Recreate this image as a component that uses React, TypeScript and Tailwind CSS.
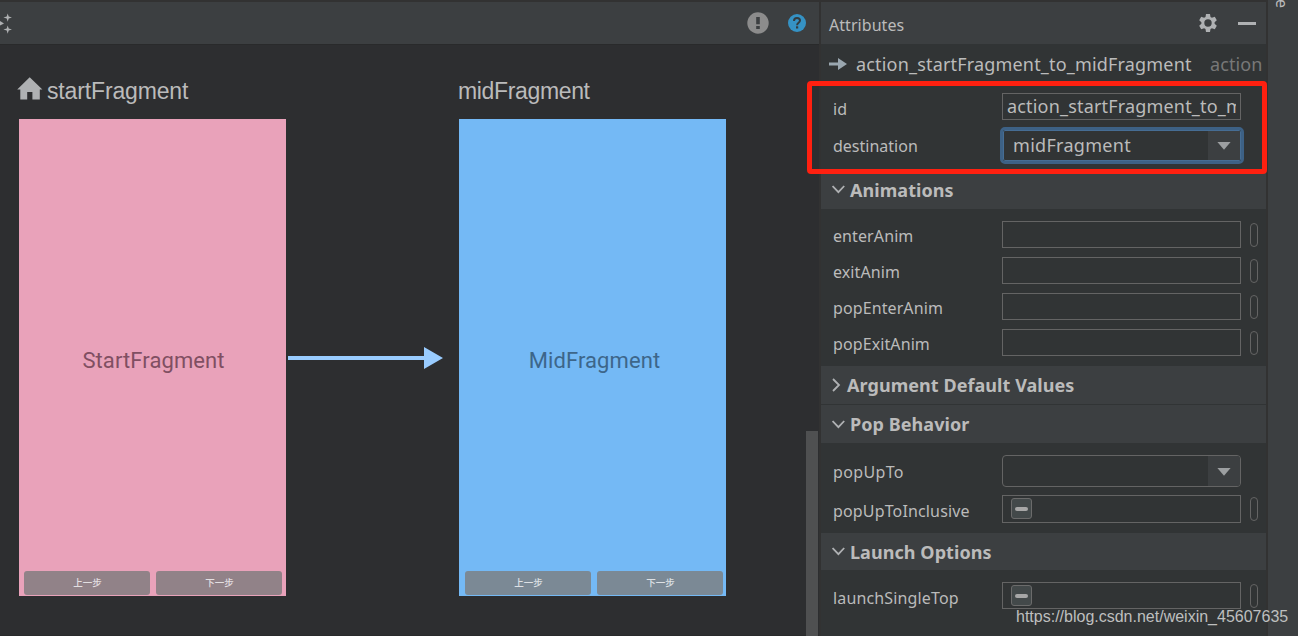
import type { ReactNode } from 'react'

function SparkIcon() {
  return (
    <svg width="13" height="22" viewBox="0 0 13 22" fill="#afb1b3">
      <path d="M0 9 4 11.4 0 13.6z" />
      <path d="M7.7 1.5 8.7 4.6 12 5.6 8.7 6.6 7.7 9.7 6.7 6.6 3.4 5.6 6.7 4.6z" />
      <path d="M7.7 13.5 8.7 16.6 12 17.6 8.7 18.6 7.7 21.7 6.7 18.6 3.4 17.6 6.7 16.6z" />
    </svg>
  )
}

function WarningIcon() {
  return (
    <svg width="22" height="22" viewBox="0 0 22 22">
      <circle cx="11" cy="11" r="10.7" fill="#8c8c8c" />
      <path d="M9.2 5h3.6v7.2H9.2zM9.2 14h3.6v3H9.2z" fill="#3c3f41" />
    </svg>
  )
}

function HelpIcon() {
  return (
    <svg width="18" height="18" viewBox="0 0 18 18" fill="none">
      <circle cx="9" cy="9" r="9" fill="#3592c4" />
      <path d="M6 6.9C6 5 7.2 4 9 4s3 1 3 2.6c0 2.2-2.9 2.3-2.9 4.6" stroke="#343b3f" strokeWidth="2" />
      <path d="M8 12.3h2.2v2.2H8z" fill="#343b3f" />
    </svg>
  )
}

function GearIcon() {
  return (
    <svg width="20" height="20" viewBox="0 0 20 20">
      <path
        d="M8 .1h4l.5 2.8 1.4.8 2.9-1 2 3.5-2.2 2v1.6l2.2 2-2 3.5-2.9-1-1.4.8-.5 2.8H8l-.5-2.8-1.4-.8-2.9 1-2-3.5 2.2-2V8.2l-2.2-2 2-3.5 2.9 1 1.4-.8zM10 5.3a3.7 3.7 0 1 0 0 7.4 3.7 3.7 0 0 0 0-7.4z"
        fill="#afb1b3"
        fillRule="evenodd"
        transform="translate(0 1)"
      />
    </svg>
  )
}

function HomeIcon() {
  return (
    <svg width="26" height="23" viewBox="0 0 26 23" fill="#afb1b3">
      <path d="M12.7.2 25.4 12.6h-2.6v9.9h-7.4v-7.6h-5.2v7.6H3.3v-9.9H.2z" />
    </svg>
  )
}

function ActionIcon() {
  return (
    <svg width="18" height="12" viewBox="0 0 18 12" fill="#9aa7b0">
      <path d="M0 4.5h9V0l9 6-9 6V7.5H0z" />
    </svg>
  )
}

function Chevron({ open }: { open: boolean }) {
  return open ? (
    <svg width="14" height="9" viewBox="0 0 14 9" fill="none" stroke="#afb1b3" strokeWidth="1.8">
      <path d="M.6 1 6.4 7.2 12.2 1" />
    </svg>
  ) : (
    <svg width="9" height="14" viewBox="0 0 9 14" fill="none" stroke="#afb1b3" strokeWidth="1.8">
      <path d="M1 1 7 7 1 13" />
    </svg>
  )
}

function DropArrow() {
  return (
    <div className="flex w-8 shrink-0 items-center justify-center bg-[#3c3f41] pt-0.5">
      <svg width="14" height="8" viewBox="0 0 14 8" fill="#9c9fa1">
        <path d="M.4 0h13.2L7 7.8z" />
      </svg>
    </div>
  )
}

function SectionHeader({ title, open = true, className }: { title: string; open?: boolean; className: string }) {
  return (
    <div className={`flex shrink-0 items-center bg-[#3c3f41] pl-[11px] text-[18px] font-bold tracking-[0.06px] text-[#bbbbbb] ${className}`}>
      <span className={open ? 'w-[18px]' : 'w-[15px]'}>
        <Chevron open={open} />
      </span>
      <span className="leading-6">{title}</span>
    </div>
  )
}

function Row({ label, labelClass, className, children }: { label: string; labelClass: string; className: string; children: ReactNode }) {
  return (
    <div className={`flex shrink-0 items-center pl-3 ${className}`}>
      <span className={`w-[169px] shrink-0 text-[16px] leading-6 text-[#bbbbbb] ${labelClass}`}>{label}</span>
      {children}
    </div>
  )
}

function TextField({ className = 'h-[27px]', children }: { className?: string; children?: ReactNode }) {
  return (
    <div className={`mb-px flex w-[239px] shrink-0 items-center overflow-hidden border border-[#646464] px-1 ${className}`}>
      {children}
    </div>
  )
}

function ResourceHandle() {
  return <div className="ml-[9px] h-6 w-2 shrink-0 rounded-[4px] border border-[#646464]" />
}

function TriState() {
  return (
    <div className="ml-1 flex h-[21px] w-[21px] items-center justify-center rounded-[3px] border border-[#6b6b6b] bg-[#43494a]">
      <div className="h-1 w-[13px] rounded-[2px] bg-[#a7a7a7]" />
    </div>
  )
}

const anims = ['enterAnim', 'exitAnim', 'popEnterAnim', 'popExitAnim']

interface ScreenProps {
  text: string
  bg: string
  textClass: string
  buttonClass: string
  padding: string
}

function Screen({ text, bg, textClass, buttonClass, padding }: ScreenProps) {
  return (
    <div className={`flex h-[477px] w-[267px] flex-col ${bg}`}>
      <div className={`flex flex-1 items-center justify-center pt-[30px] font-[Roboto] text-[22px] tracking-[0.1px] ${textClass}`}>{text}</div>
      <div className={`flex gap-[6px] pb-[0.6px] ${padding}`}>
        {['上一步', '下一步'].map(b => (
          <div
            key={b}
            className={`flex h-[24.4px] w-[126px] items-center justify-center rounded-[3px] pb-0.5 font-['Noto_Sans_CJK_SC',sans-serif] text-[9.5px] font-medium ${buttonClass}`}
          >
            {b}
          </div>
        ))}
      </div>
    </div>
  )
}

function Canvas() {
  return (
    <div className="relative flex-1 overflow-hidden border-t border-[#292a2b] bg-[#2d2e30] font-['Liberation_Sans',sans-serif] text-[#bbbbbb]">
      <div className="absolute left-[17px] top-[32px] flex">
        <HomeIcon />
        <span className="ml-1 pt-0.5 text-[23px] leading-6 tracking-[-0.15px]">startFragment</span>
      </div>
      <div className="absolute left-[19px] top-[74px]">
        <Screen text="StartFragment" bg="bg-[#e9a2ba]" textClass="text-[#804f62] pl-0.5" buttonClass="bg-[#918288] text-[#e3dfe1]" padding="pl-[5.4px]" />
      </div>
      <svg className="absolute left-[288px] top-[301px]" width="156" height="24" viewBox="0 0 156 24" fill="#99ccff">
        <path d="M0 10h136V1l19 11-19 11v-9H0z" />
      </svg>
      <div className="absolute left-[458px] top-[34px] text-[23px] leading-6 tracking-[-0.35px]">midFragment</div>
      <div className="absolute left-[459px] top-[74px]">
        <Screen text="MidFragment" bg="bg-[#74b9f5]" textClass="text-[#3d668a] pl-1" buttonClass="bg-[#7b8995] text-[#dde1e5]" padding="pl-[6.4px]" />
      </div>
      <div className="absolute bottom-0 left-0 h-px w-full bg-[#292a2b]" />
      <div className="absolute bottom-0 left-[806px] h-[205px] w-3 bg-[#4f5051]" />
    </div>
  )
}

function AttributesPanel() {
  return (
    <div className="flex w-[445px] shrink-0 flex-col bg-[#313435]">
      <div className="flex h-[42px] shrink-0 items-center bg-[#3c3f41] pl-2 pr-[10px] text-[#bbbbbb]">
        <span className="flex-1 pt-[3px] text-[16px] leading-6 tracking-[0.05px]">Attributes</span>
        <GearIcon />
        <div className="ml-5 h-[3px] w-[18px] bg-[#afb1b3]" />
      </div>
      <div className="mb-[6px] flex h-10 shrink-0 items-center whitespace-nowrap pl-2 text-[18px] leading-6 text-[#bbbbbb]">
        <ActionIcon />
        <span className="ml-[9px] w-[354px] tracking-[0.18px]">action_startFragment_to_midFragment</span>
        <span className="tracking-[0.1px] text-[#787878]">action</span>
      </div>
      <Row label="id" labelClass="pt-[3px]" className="h-[34px]">
        <TextField>
          <span className="mb-0.5 block w-[229px] overflow-hidden whitespace-nowrap text-[18px] leading-6 tracking-[0.18px] text-[#bbbbbb]">
            action_startFragment_to_midFragment
          </span>
        </TextField>
      </Row>
      <Row label="destination" labelClass="pt-px" className="h-[42px]">
        <div className="-ml-[2px] flex h-[37px] w-[244px] shrink-0 overflow-hidden rounded-[5px] border-[3px] border-[#3d6185]">
          <div className="flex flex-1 overflow-hidden rounded-[2px] border border-[#466d94]">
            <span className="flex-1 pl-[9px] text-[18px] leading-7 tracking-[0.3px] text-[#bbbbbb]">midFragment</span>
            <DropArrow />
          </div>
        </div>
      </Row>

      <SectionHeader title="Animations" className="mt-[6px] h-[37px] pb-0.5" />
      <div className="flex h-[157px] shrink-0 flex-col pt-2">
        {anims.map(name => (
          <Row key={name} label={name} labelClass="pt-px tracking-[0.1px]" className="h-9">
            <TextField />
            <ResourceHandle />
          </Row>
        ))}
      </div>

      <SectionHeader title="Argument Default Values" open={false} className="h-[38px]" />
      <SectionHeader title="Pop Behavior" className="mt-px h-[38px]" />
      <Row label="popUpTo" labelClass="pt-px tracking-[0.35px]" className="mt-[9px] h-[38px]">
        <div className="flex h-8 w-[239px] shrink-0 overflow-hidden rounded-[4px] border border-[#646464]">
          <div className="flex-1" />
          <DropArrow />
        </div>
      </Row>
      <Row label="popUpToInclusive" labelClass="pt-1 tracking-[0.15px]" className="h-[38px]">
        <TextField className="h-[28px]">
          <TriState />
        </TextField>
        <ResourceHandle />
      </Row>

      <SectionHeader title="Launch Options" className="mt-[5px] h-[37px]" />
      <Row label="launchSingleTop" labelClass="pt-[3px] tracking-[0.15px]" className="mt-2 h-9">
        <TextField>
          <TriState />
        </TextField>
        <ResourceHandle />
      </Row>
    </div>
  )
}

export default function App() {
  return (
    <div className="relative flex h-[636px] w-[1298px] overflow-hidden bg-[#323232] font-['Noto_Sans',sans-serif]">
      <div className="mt-[2px] flex w-[819px] shrink-0 flex-col">
        <div className="flex h-[42px] shrink-0 items-center bg-[#3c3f41] pr-[13px]">
          <div className="flex-1">
            <SparkIcon />
          </div>
          <WarningIcon />
          <div className="ml-[19px]">
            <HelpIcon />
          </div>
        </div>
        <Canvas />
      </div>
      <div className="ml-[2px] mt-[2px] flex">
        <AttributesPanel />
      </div>
      <div className="ml-[2px] w-[30px] bg-[#3c3f41] pl-[5px]">
        <span className="-mt-px block h-[9px] text-[16px] leading-[18px] text-[#bbbbbb] [writing-mode:vertical-rl]">e</span>
      </div>

      {/* Highlight around id and destination */}
      <div className="absolute left-[807px] top-[81px] h-[93px] w-[460px] rounded-[4px] border-[5px] border-[#ff2010]" />
      <div className="absolute left-[1016px] top-[607px] whitespace-nowrap font-['Liberation_Sans',sans-serif] text-[16px] leading-5 text-[#bebfbf]">
        https://blog.csdn.net/weixin_45607635
      </div>
    </div>
  )
}
